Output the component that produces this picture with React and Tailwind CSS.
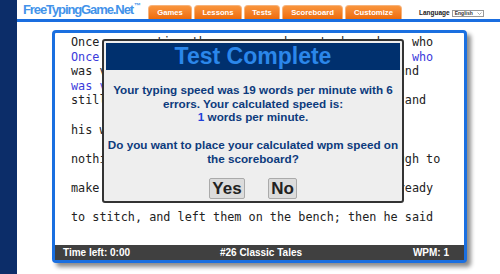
const tabs = [
  { label: 'Games', w: 'w-[44px]' },
  { label: 'Lessons', w: 'w-[48px]' },
  { label: 'Tests', w: 'w-[36px]' },
  { label: 'Scoreboard', w: 'w-[61px]' },
  { label: 'Customize', w: 'w-[57px]' },
];

// source line, then what the player typed under it
const lines = [
  ['Once upon a time there was an honest shoemaker, who', 'src'],
  ['Once upon a time there was an honest shoemaker, who', 'typed'],
  ['was very honest and worked very hard all day, and', 'src'],
  ['was very', 'typed'],
  ['still he could never earn enough to live upon; and', 'src'],
  ['', 'typed'],
  ['his wife and he were very poor indeed.', 'src'],
  ['', 'typed'],
  ['nothing was left but leather that was just enough to', 'src'],
  ['', 'typed'],
  ['make just one pair of shoes. He cut them out, ready', 'src'],
  ['', 'typed'],
  ['to stitch, and left them on the bench; then he said', 'src'],
  ['', 'typed'],
];

const Header = () => (
  <div className="h-[19px] flex items-end">
    <div className="w-[131px] h-full pl-[6px] pt-[2px] flex items-start shrink-0">
      <span className="text-[13px] font-bold leading-[16px] tracking-[-1.1px] text-[#4393ea]">FreeTypingGame.Net</span>
      <span className="text-[7px] font-bold text-[#4393ea] leading-none ml-[1px]">™</span>
    </div>
    <div className="flex gap-[2px] items-end">
      {tabs.map(t => (
        <div
          key={t.label}
          className={`${t.w} h-[14px] rounded-t-[4px] bg-gradient-to-b from-[#f9953c] to-[#ee6b06] border border-b-0 border-[#f7b27a] flex items-center justify-center text-white text-[7.7px] font-bold`}
        >
          {t.label}
        </div>
      ))}
    </div>
    <div className="ml-[17px] mb-[1px] flex items-center gap-[2px]">
      <span className="text-[6.5px] font-bold text-[#222]">Language</span>
      <div className="w-[32px] h-[7px] border border-[#999] bg-white flex items-center justify-between pl-[2px] pr-[1px]">
        <span className="text-[5px] font-bold leading-none text-[#333]">English</span>
        <svg width="5" height="3" viewBox="0 0 5 3">
          <path d="M0.5 0.5 L2.5 2.5 L4.5 0.5" fill="none" stroke="#888" strokeWidth="0.7" />
        </svg>
      </div>
    </div>
  </div>
);

const ResultDialog = () => (
  <div className="absolute left-[47px] top-[6px] w-[302px] h-[164px] border-2 border-[#333] rounded-[3px] bg-[#eeeeee] px-[2px] pt-[2px] flex flex-col">
    <div className="h-[27px] bg-[#00306e] flex items-center justify-center text-[23px] font-bold leading-[27px] text-[#2b87ea]">
      Test Complete
    </div>
    <div className="mt-[13px] text-center text-[11.7px] font-bold leading-[13.7px] text-[#0d3b7d] whitespace-nowrap">
      <div>Your typing speed was 19 words per minute with 6</div>
      <div>errors. Your calculated speed is:</div>
      <div><span className="text-[#1f3fd9]">1</span> words per minute.</div>
      <div className="h-[13.7px]" />
      <div>Do you want to place your calculated wpm speed on</div>
      <div>the scoreboard?</div>
    </div>
    <div className="mt-[13px] flex justify-center gap-[23px]">
      <button className="w-[36px] h-[21px] bg-[#dcdcdc] border border-[#aaa] rounded-[2px] text-[17px] font-bold leading-none text-[#222]">Yes</button>
      <button className="w-[29px] h-[21px] bg-[#dcdcdc] border border-[#aaa] rounded-[2px] text-[17px] font-bold leading-none text-[#222]">No</button>
    </div>
  </div>
);

const App = () => {
  return (
    <div className="flex w-[500px] h-[274px] overflow-hidden bg-white font-['Liberation_Sans',Arial,sans-serif]">
      <div className="w-[17px] shrink-0 bg-[#0c2d69]" />
      <div className="flex-1 flex flex-col">
        <Header />
        <div className="h-[3px] bg-[#1a6ee0]" />
        <div className="pl-[35px] pt-[8px]">
          <div className="relative w-[415px] h-[233px] border-[3px] border-[#1a6fe0] rounded-[4px] bg-white shadow-[4px_4px_4px_rgba(0,0,0,0.45)] flex flex-col">
            <div className="flex-1 pl-[16px] pt-[2px] font-['DejaVu_Sans_Mono',monospace] text-[11.8px] leading-[14.6px] whitespace-pre">
              {lines.map(([text, kind], i) => (
                <div key={i} className={`h-[14.6px] ${kind === 'typed' ? 'text-[#3b3bdb]' : 'text-[#222]'}`}>{text}</div>
              ))}
            </div>
            <div className="h-[15px] bg-[#404040] grid grid-cols-[1fr_auto_1fr] items-center pl-[8px] pr-[15px] text-[10px] font-bold text-white">
              <span>Time left: 0:00</span>
              <span className="pl-[10px]">#26 Classic Tales</span>
              <span className="text-right">WPM: 1</span>
            </div>
            <ResultDialog />
          </div>
        </div>
      </div>
    </div>
  );
};

export default App;
